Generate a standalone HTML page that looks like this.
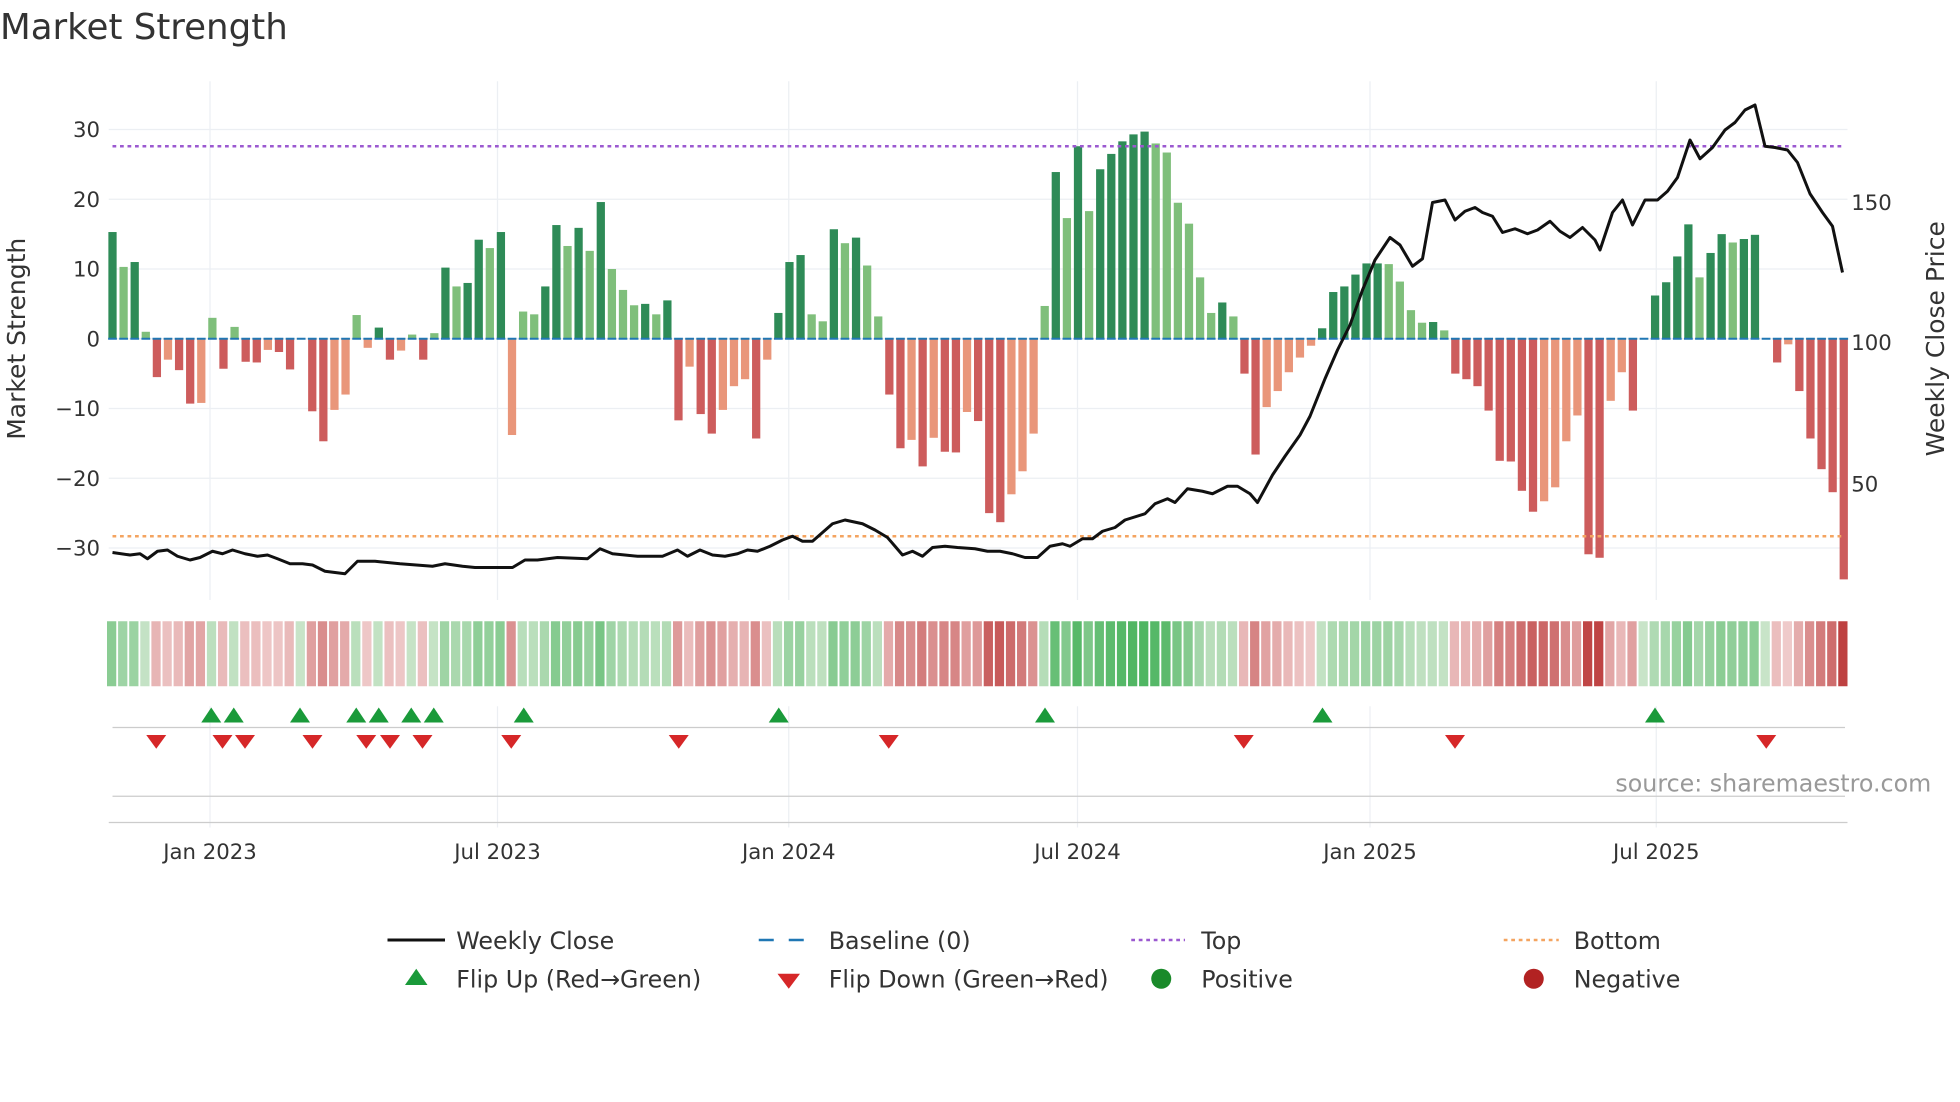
<!DOCTYPE html>
<html><head><meta charset="utf-8"><style>
html,body{margin:0;padding:0;background:#fff;}
svg{display:block;font-family:"DejaVu Sans","Liberation Sans",sans-serif;}
</style></head><body>
<svg id="s" width="1960" height="1102" viewBox="0 0 1568 881.6" xmlns="http://www.w3.org/2000/svg">
<rect width="1568" height="881.6" fill="#fff"/>
<text x="0" y="31" font-size="28.5" fill="#333">Market Strength</text>
<g id="grid" stroke="#eceff3" stroke-width="1"></g>
<g id="bars"></g>
<g id="heat"></g>
<line x1="90" y1="117" x2="1476" y2="117" stroke="#9b59d0" stroke-width="2" stroke-dasharray="3,3"/>
<line x1="90" y1="429" x2="1476" y2="429" stroke="#f4a460" stroke-width="2" stroke-dasharray="3,3"/>
<polyline id="price" fill="none" stroke="#111" stroke-width="2.4" stroke-linejoin="round"/>
<g id="marks"></g>
<line x1="90" y1="582" x2="1476" y2="582" stroke="#ccc"/>
<line x1="90" y1="637" x2="1476" y2="637" stroke="#ccc"/>
<line x1="87" y1="658" x2="1478" y2="658" stroke="#ccc"/>
<text x="1545" y="633" font-size="19" fill="#999" text-anchor="end">source: sharemaestro.com</text>
<g font-size="17" fill="#333" text-anchor="end" id="yl"></g>
<g font-size="17" fill="#333" id="yr"></g>
<g font-size="17" fill="#333" text-anchor="middle" id="xl"></g>
<text transform="translate(20,271) rotate(-90)" font-size="20" fill="#333" text-anchor="middle">Market Strength</text>
<text transform="translate(1555,271) rotate(-90)" font-size="20" fill="#333" text-anchor="middle">Weekly Close Price</text>
<g font-size="19" fill="#333">
<line x1="310" y1="752" x2="356" y2="752" stroke="#111" stroke-width="2.4"/><text x="365" y="759">Weekly Close</text>
<line x1="607" y1="752" x2="650" y2="752" stroke="#1f77b4" stroke-width="2" stroke-dasharray="12,12"/><text x="663" y="759">Baseline (0)</text>
<line x1="905" y1="752" x2="948" y2="752" stroke="#9b59d0" stroke-width="2" stroke-dasharray="3,3"/><text x="961" y="759">Top</text>
<line x1="1203" y1="752" x2="1247" y2="752" stroke="#f4a460" stroke-width="2" stroke-dasharray="3,3"/><text x="1259" y="759">Bottom</text>
<polygon points="324,788 342,788 333,775" fill="#1a9a3a"/><text x="365" y="790">Flip Up (Red→Green)</text>
<polygon points="622,779 640,779 631,791" fill="#d62728"/><text x="663" y="790">Flip Down (Green→Red)</text>
<circle cx="929" cy="783" r="8" fill="#1a8a2a"/><text x="961" y="790">Positive</text>
<circle cx="1227" cy="783" r="8" fill="#b22222"/><text x="1259" y="790">Negative</text>
</g>
</svg>
<script>
var NS="http://www.w3.org/2000/svg";
function el(p,t,a,txt){var e=document.createElementNS(NS,t);for(var k in a)e.setAttribute(k,a[k]);if(txt!=null)e.textContent=txt;document.getElementById(p).appendChild(e);return e;}
var Y=function(v){return 271-v*5.58;};
[30,20,10,0,-10,-20,-30].forEach(function(v){el("grid","line",{x1:87,x2:1478,y1:Y(v),y2:Y(v)});el("yl","text",{x:80,y:Y(v)+6},(v<0?"−":"")+Math.abs(v));});
[[150,162],[100,274],[50,387]].forEach(function(a){el("yr","text",{x:1481,y:a[1]+6},a[0]);});
[[168,"Jan 2023"],[398,"Jul 2023"],[631,"Jan 2024"],[862,"Jul 2024"],[1096,"Jan 2025"],[1325,"Jul 2025"]].forEach(function(a){el("grid","line",{x1:a[0],x2:a[0],y1:65,y2:480});el("grid","line",{x1:a[0],x2:a[0],y1:565,y2:662});el("xl","text",{x:a[0],y:687},a[1]);});
var v=[15.3,10.3,11,1,-5.5,-3,-4.5,-9.3,-9.2,3,-4.3,1.7,-3.3,-3.4,-1.6,-1.9,-4.4,0,-10.4,-14.7,-10.2,-8,3.4,-1.3,1.6,-3,-1.7,0.6,-3,0.8,10.2,7.5,8,14.2,13,15.3,-13.8,3.9,3.5,7.5,16.3,13.3,15.9,12.6,19.6,10,7,4.8,5,3.5,5.5,-11.7,-4,-10.8,-13.6,-10.2,-6.8,-5.8,-14.3,-3,3.7,11,12,3.5,2.5,15.7,13.7,14.5,10.5,3.2,-8,-15.7,-14.5,-18.3,-14.2,-16.2,-16.3,-10.5,-11.8,-25,-26.3,-22.3,-19,-13.6,4.7,23.9,17.3,27.6,18.3,24.3,26.5,28.3,29.3,29.7,28,26.7,19.5,16.5,8.8,3.7,5.2,3.2,-5,-16.6,-9.8,-7.5,-4.8,-2.7,-1,1.5,6.7,7.5,9.2,10.8,10.8,10.7,8.2,4.1,2.3,2.4,1.2,-5,-5.8,-6.8,-10.3,-17.5,-17.6,-21.8,-24.8,-23.3,-21.3,-14.7,-11,-30.9,-31.4,-8.9,-4.8,-10.3,0,6.2,8.1,11.8,16.4,8.8,12.3,15,13.8,14.3,14.9,0,-3.4,-0.8,-7.5,-14.3,-18.7,-22,-34.5];
var n=v.length,step=(1475-90)/(n-1);
for(var i=0;i<n;i++){var x=90+i*step,val=v[i],pv=i?v[i-1]:0;var dark=Math.abs(val)>=Math.abs(pv);
var c=val>=0?(dark?"#2e8b57":"#7fbf7b"):(dark?"#cd5c5c":"#e9967a");
if(val!==0)el("bars","rect",{x:x-3.3,width:6.6,y:Math.min(Y(val),271),height:Math.abs(val)*5.58,fill:c});
el("bars","line",{x1:x-3.5,x2:x+3.5,y1:271,y2:271,stroke:"#1f77b4","stroke-width":1.6});
var t=Math.min(Math.abs(val)/32,1),hc;
if(val>=0){hc="rgb("+Math.round(200-130*t)+","+Math.round(228-50*t)+","+Math.round(200-110*t)+")";}else{hc="rgb("+Math.round(240-50*t)+","+Math.round(205-140*t)+","+Math.round(205-140*t)+")";}
el("heat","rect",{x:x-4.4,width:7.4,y:497,height:52,fill:hc});}
var p=[90,442,104,444,112,443,118,447,126,441,134,440,142,445,152,448,160,446,170,441,178,443,186,440,196,443,206,445,214,444,222,447,232,451,242,451,250,452,260,457,276,459,286,449,300,449,320,451,346,453,356,451,370,453,380,454,410,454,420,448,430,448,446,446,470,447,480,439,490,443,510,445,530,445,542,440,550,445,560,440,570,444,580,445,590,443,598,440,606,441,616,437,626,432,634,429,642,433,650,433,666,419,676,416,690,419,700,424,710,430,716,437,722,444,730,441,738,445,746,438,756,437,766,438,780,439,790,441,800,441,810,443,820,446,830,446,840,437,850,435,856,437,866,431,874,431,882,425,892,422,900,416,916,411,924,403,934,399,940,402,950,391,962,393,970,395,982,389,990,389,1000,395,1006,402,1018,380,1028,365,1040,348,1048,333,1060,303,1070,280,1080,260,1090,232,1100,208,1112,190,1120,196,1130,213,1138,207,1146,162,1156,160,1164,176,1172,169,1180,166,1186,170,1194,173,1202,186,1212,183,1222,187,1230,184,1240,177,1248,185,1256,190,1266,182,1276,192,1280,200,1290,170,1298,160,1306,180,1316,160,1326,160,1334,153,1342,142,1352,112,1360,127,1370,118,1380,104,1388,98,1396,88,1404,84,1412,117,1420,118,1430,120,1438,130,1448,155,1458,170,1466,181,1474,218];
var s="";for(var j=0;j<p.length;j+=2)s+=p[j]+","+p[j+1]+" ";document.getElementById("price").setAttribute("points",s);
[169,187,240,285,303,329,347,419,623,836,1058,1324].forEach(function(x){el("marks","polygon",{points:(x-8)+",578 "+(x+8)+",578 "+x+",566",fill:"#1a9a3a"});});
[125,178,196,250,293,312,338,409,543,711,995,1164,1413].forEach(function(x){el("marks","polygon",{points:(x-8)+",588 "+(x+8)+",588 "+x+",599",fill:"#d62728"});});
</script>
</body></html>
